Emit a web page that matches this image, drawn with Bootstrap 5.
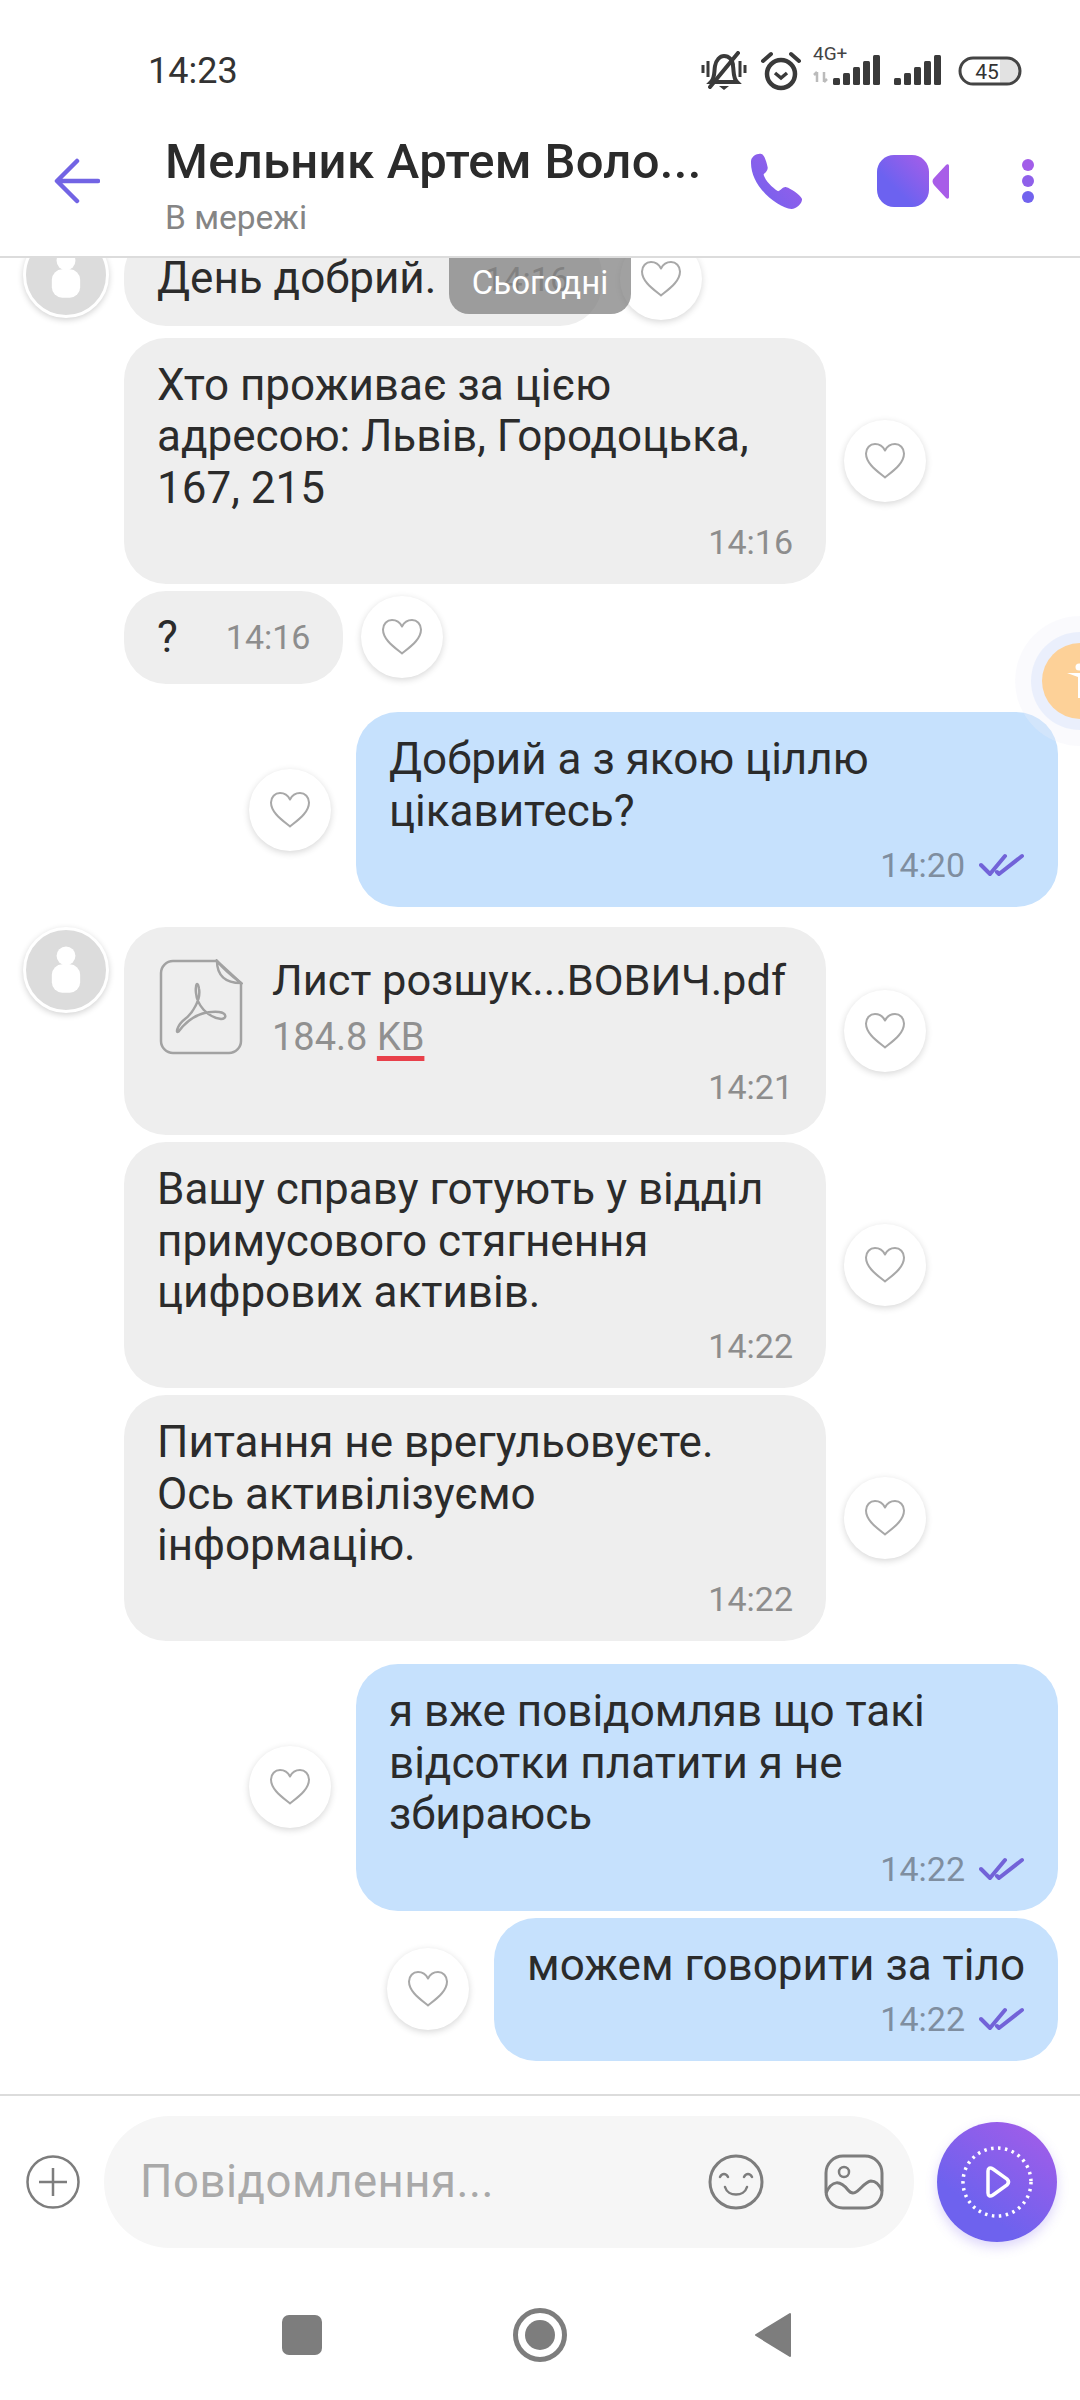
<!DOCTYPE html>
<html lang="uk">
<head>
  <meta charset="UTF-8" />
  <meta name="viewport" content="width=device-width, initial-scale=1.0" />
  <title>Chat</title>
  <link href="https://cdn.jsdelivr.net/npm/bootstrap@5.3.0/dist/css/bootstrap.min.css" rel="stylesheet" />
  <style>
    body {
      width: 1080px;
      height: 2400px;
      background: #fff;
      font-family: Roboto, "Liberation Sans", sans-serif;
      color: #2b2b2b;
      overflow: hidden;
    }

    .screen { height: 2400px; position: relative; overflow: hidden; }

    .status-bar { height: 125px; padding: 44px 58px 0 148px; }
    .status-time { font-size: 36px; line-height: 54px; color: #333; }
    .status-icons { height: 54px; }
    .sig-up { margin-bottom: 14px; }
    .gap-alarm { margin-left: 13px; }
    .gap-sig { margin-left: 11px; }

    .chat-head { height: 133px; border-bottom: 2px solid #dcdcdc; padding: 0 34px 20px 54px; }
    .chat-name { font-size: 49px; font-weight: 500; line-height: 56px; white-space: nowrap; letter-spacing: .3px; }
    .chat-state { font-size: 33.5px; line-height: 40px; color: #858585; margin-top: 8px; }
    .head-text { margin-left: 65px; width: 560px; margin-top: 11px; }
    .head-video { margin-left: 73px; }
    .head-dots { margin-left: 71px; }

    .chat-list { height: 1836px; overflow: hidden; position: relative; }
    .chat-scroll { margin-top: -26px; }

    .msg-row { display: flex; }
    .msg-in { align-items: center; }
    .msg-out { justify-content: flex-end; align-items: center; padding-right: 22px; }
    .gap-s { margin-top: 7px; }
    .gap-m { margin-top: 12px; }
    .gap-l { margin-top: 23px; }
    .gap-file { margin-top: 20px; }
    .gap-xl { margin-top: 28px; }

    .avatar-slot { width: 124px; flex: none; align-self: flex-start; padding-left: 23px; }
    .avatar-pic {
      width: 86px; height: 86px; border-radius: 50%; background: #dcdcdc;
      border: 3px solid #fff; box-shadow: 0 2px 6px rgba(0,0,0,.18);
      display: flex; align-items: center; justify-content: center;
    }

    .bubble { border-radius: 42px; padding: 22px 33px; font-size: 44px; line-height: 51.5px; }
    .bubble-in { background: #eeeeee; }
    .bubble-out { background: #c6e1fd; }
    .bubble-wide { width: 702px; }
    .msg-time { font-size: 34px; line-height: 40px; color: #8d8d8d; margin-top: 7.5px; text-align: right; }
    .msg-time-row { display: flex; justify-content: flex-end; align-items: center; gap: 14px; margin-top: 8px; }
    .msg-time-row .msg-time { margin-top: 0; color: #7f8ea0; }
    .bubble-short { display: flex; align-items: center; gap: 48px; padding-top: 21px; padding-bottom: 21px; }
    .bubble-short .msg-time { margin: 0; }
    .bubble-file { padding-bottom: 28px; }

    .heart-btn {
      width: 82px; height: 82px; border-radius: 50%; background: #fff; flex: none;
      box-shadow: 0 2px 7px rgba(0,0,0,.16);
      display: flex; align-items: center; justify-content: center;
    }
    .msg-in .heart-btn { margin-left: 18px; }
    .msg-out .heart-btn { margin-right: 25px; }

    .file-row { display: flex; gap: 29px; padding-left: 2px; }
    .file-icon { flex: none; margin-top: 10px; }
    .file-name { line-height: 51px; font-size: 43.4px; white-space: nowrap; margin-top: 6px; }
    .file-size { font-size: 38px; line-height: 44px; color: #909090; margin-top: 9px; }
    .file-size u { text-decoration: underline; text-decoration-color: #e8404a; text-decoration-thickness: 5px; text-underline-offset: 6px; }
    .bubble-file .msg-time { margin-top: 8px; }

    .date-pill {
      position: absolute; left: 449px; top: 0; width: 182px; height: 56px;
      background: rgba(125,125,125,.72); color: #fff; font-size: 33px; line-height: 50px;
      text-align: center; border-radius: 0 0 20px 20px;
    }
    .float-badge {
      position: absolute; left: 1042px; top: 643px; width: 76px; height: 76px; border-radius: 50%;
      background: #fdd198; box-shadow: 0 0 0 11px rgba(226,233,252,.65), 0 0 0 27px rgba(240,240,250,.3);
      z-index: 3; display: flex; align-items: center; padding-left: 25px;
    }

    .composer { height: 175px; border-top: 2px solid #dcdcdc; padding: 20px 22px 0 26px; }
    .composer-plus { margin-top: 39px; }
    .composer-emoji { margin-right: 60px; }
    .input-pill {
      width: 810px; height: 132px; border-radius: 66px; background: #f6f6f6; margin-left: 24px;
      padding: 0 30px 0 36px;
    }
    .input-hint { font-size: 45.5px; color: #a9a9a9; letter-spacing: .5px; }
    .send-btn {
      width: 120px; height: 120px; border-radius: 50%; margin-left: 23px; margin-top: 6px;
      background: linear-gradient(35deg, #6e62ee 30%, #a75ce8 100%);
      box-shadow: 0 5px 12px rgba(120,90,235,.25);
      display: flex; align-items: center; justify-content: center;
    }

    .nav-keys { height: 100px; padding-top: 32px; }
    .nav-slot { width: 100px; display: flex; justify-content: center; }
    .nav-left { margin-right: 138px; }
    .nav-right { margin-left: 138px; }
    .nav-back { margin-right: 10px; }
  </style>
</head>

<body>
  <svg width="0" height="0" class="d-block">
    <symbol id="heart" viewBox="0 0 42 38">
      <path d="M21 35.5 C13 29 2 21.5 2 11.5 C2 6 6 2 11 2 C15 2 19 4.5 21 8.5 C23 4.5 27 2 31 2 C36 2 40 6 40 11.5 C40 21.5 29 29 21 35.5Z" fill="none" stroke="#a8a8a8" stroke-width="2" stroke-linejoin="round" />
    </symbol>
    <symbol id="ticks" viewBox="0 0 46 24">
      <path d="M2 12 L11 21 L26 3 M18 19 L20 21 L43 3" fill="none" stroke="#7263d8" stroke-width="4" stroke-linecap="round" stroke-linejoin="round" />
    </symbol>
    <symbol id="person" viewBox="0 0 36 52">
      <circle cx="18" cy="11" r="10" fill="#fff" />
      <rect x="3" y="20" width="30" height="30" rx="11" fill="#fff" />
    </symbol>
  </svg>

  <div class="screen">
    <div class="status-bar d-flex justify-content-between align-items-start">
      <div class="status-time">14:23</div>
      <div class="status-icons d-flex align-items-center">
        <svg width="46" height="40" viewBox="0 0 46 40">
          <path d="M10 31 C14 27 13 21 14 15 C15 9 19 5 23 5 C28 5 32 9 32 15 C33 21 32 27 36 31 Z" fill="none" stroke="#3a3a3a" stroke-width="4" />
          <path d="M9 36 L37 2" stroke="#3a3a3a" stroke-width="4" stroke-linecap="round" />
          <path d="M18 35 H28 L23 39 Z" fill="#3a3a3a" />
          <path d="M2 14 V22 M7 10 V26 M39 10 V26 M44 14 V22" stroke="#3a3a3a" stroke-width="3" />
        </svg>
        <svg width="42" height="42" viewBox="0 0 42 42" class="gap-alarm">
          <circle cx="21" cy="24" r="14" fill="none" stroke="#3a3a3a" stroke-width="4.5" />
          <path d="M15 23 L21 28 L27 23" fill="none" stroke="#3a3a3a" stroke-width="3.5" />
          <path d="M3 11 L11 4 M39 11 L31 4" stroke="#3a3a3a" stroke-width="4" stroke-linecap="round" />
        </svg>
        <svg width="70" height="44" viewBox="0 0 70 44" class="sig-up gap-sig">
          <text x="0" y="18" font-size="19" font-family="Roboto, sans-serif" fill="#444">4G+</text>
          <path d="M4 30 V40 M1 33 L4 30 M11 30 V40 M14 37 L11 40" stroke="#bbb" stroke-width="2.5" fill="none" />
          <g fill="#3a3a3a">
            <rect x="20" y="36" width="7" height="7" rx="1.5" /><rect x="30" y="31" width="7" height="12" rx="1.5" />
            <rect x="40" y="25" width="7" height="18" rx="1.5" /><rect x="50" y="19" width="7" height="24" rx="1.5" />
            <rect x="60" y="13" width="7" height="30" rx="1.5" />
          </g>
        </svg>
        <svg width="48" height="44" viewBox="0 0 48 44" class="sig-up gap-sig">
          <g fill="#3a3a3a">
            <rect x="0" y="36" width="7" height="7" rx="1.5" /><rect x="10" y="31" width="7" height="12" rx="1.5" />
            <rect x="20" y="25" width="7" height="18" rx="1.5" /><rect x="30" y="19" width="7" height="24" rx="1.5" />
            <rect x="40" y="13" width="7" height="30" rx="1.5" />
          </g>
        </svg>
        <svg width="64" height="30" viewBox="0 0 64 30" class="ms-3">
          <path d="M42 3 H50 A12 12 0 0 1 50 27 H42Z" fill="#e2e2e2" />
          <rect x="2" y="2" width="60" height="26" rx="13" fill="none" stroke="#444" stroke-width="3" />
          <text x="29" y="23" text-anchor="middle" font-size="21" font-family="Roboto, sans-serif" fill="#333">45</text>
        </svg>
      </div>
    </div>

    <div class="chat-head d-flex align-items-center">
      <svg width="46" height="46" viewBox="0 0 46 46">
        <path d="M44 23 H4 M23 3 L3 23 L23 43" fill="none" stroke="#7264e4" stroke-width="4.5" stroke-linecap="round" stroke-linejoin="round" />
      </svg>
      <div class="head-text">
        <div class="chat-name">Мельник Артем Воло...</div>
        <div class="chat-state">В мережі</div>
      </div>
      <svg width="54" height="56" viewBox="0 0 52 54" class="ms-4">
        <defs>
          <linearGradient id="pg" x1="0" y1="1" x2="1" y2="0"><stop offset="0" stop-color="#6f62ee" /><stop offset="1" stop-color="#a25de9" /></linearGradient>
        </defs>
        <path d="M2 7 C3 3 8 0 12 1 C15 2 17 9 18 14 C18 18 15 19 14 21 C16 27 22 33 28 37 C31 36 33 32 36 33 C40 34 49 40 51 44 C52 48 46 54 41 54 C27 53 0 31 2 7Z" fill="url(#pg)" />
      </svg>
      <svg width="74" height="54" viewBox="0 0 74 54" class="head-video">
        <defs>
          <linearGradient id="vg" x1="0" y1="1" x2="1" y2="0"><stop offset="0.35" stop-color="#6c62f0" /><stop offset="1" stop-color="#a85de8" /></linearGradient>
        </defs>
        <rect x="1" y="1" width="52" height="52" rx="17" fill="url(#vg)" />
        <path d="M73 12 V43 C73 45 71 45 70 44 L58 31 C56 28 56 26 58 24 L70 11 C71 10 73 10 73 12Z" fill="#a85de8" />
      </svg>
      <svg width="14" height="46" viewBox="0 0 14 46" class="head-dots">
        <circle cx="7" cy="7" r="6" fill="#a25de9" /><circle cx="7" cy="23" r="6" fill="#8f60ea" /><circle cx="7" cy="39" r="6" fill="#7263ee" />
      </svg>
    </div>

    <div class="chat-list">
      <div class="chat-scroll">
        <div class="msg-row msg-in">
          <div class="avatar-slot"><div class="avatar-pic"><svg width="34" height="50"><use href="#person" /></svg></div></div>
          <div class="bubble bubble-in bubble-short"><span>День добрий.</span><span class="msg-time">14:16</span></div>
          <div class="heart-btn"><svg width="42" height="38"><use href="#heart" /></svg></div>
        </div>

        <div class="msg-row msg-in gap-m">
          <div class="avatar-slot"></div>
          <div class="bubble bubble-in bubble-wide">
            Хто проживає за цією<br />адресою: Львів, Городоцька,<br />167, 215
            <div class="msg-time">14:16</div>
          </div>
          <div class="heart-btn"><svg width="42" height="38"><use href="#heart" /></svg></div>
        </div>

        <div class="msg-row msg-in gap-s">
          <div class="avatar-slot"></div>
          <div class="bubble bubble-in bubble-short"><span>?</span><span class="msg-time">14:16</span></div>
          <div class="heart-btn"><svg width="42" height="38"><use href="#heart" /></svg></div>
        </div>

        <div class="msg-row msg-out gap-xl">
          <div class="heart-btn"><svg width="42" height="38"><use href="#heart" /></svg></div>
          <div class="bubble bubble-out bubble-wide">
            Добрий а з якою ціллю<br />цікавитесь?
            <div class="msg-time-row"><span class="msg-time">14:20</span><svg width="46" height="24"><use href="#ticks" /></svg></div>
          </div>
        </div>

        <div class="msg-row msg-in gap-file">
          <div class="avatar-slot"><div class="avatar-pic"><svg width="34" height="50"><use href="#person" /></svg></div></div>
          <div class="bubble bubble-in bubble-wide bubble-file">
            <div class="file-row">
              <svg width="84" height="96" viewBox="0 0 84 96" class="file-icon">
                <path d="M14 2 H58 L82 24 V82 A12 12 0 0 1 70 94 H14 A12 12 0 0 1 2 82 V14 A12 12 0 0 1 14 2Z" fill="none" stroke="#a2a2a2" stroke-width="2.5" />
                <path d="M58 2 C58 16 66 24 82 24 C74 18 66 12 58 2Z" fill="none" stroke="#a2a2a2" stroke-width="2.5" />
                <path d="M20 72 C16 76 18 66 26 60 C34 54 42 40 40 30 C39 22 36 24 37 34 C38 46 48 58 62 60 C68 60 68 54 60 53 C46 52 32 56 20 72Z" fill="none" stroke="#a2a2a2" stroke-width="2.5" />
              </svg>
              <div>
                <div class="file-name">Лист розшук...ВОВИЧ.pdf</div>
                <div class="file-size">184.8 <u>KB</u></div>
              </div>
            </div>
            <div class="msg-time">14:21</div>
          </div>
          <div class="heart-btn"><svg width="42" height="38"><use href="#heart" /></svg></div>
        </div>

        <div class="msg-row msg-in gap-s">
          <div class="avatar-slot"></div>
          <div class="bubble bubble-in bubble-wide">
            Вашу справу готують у відділ<br />примусового стягнення<br />цифрових активів.
            <div class="msg-time">14:22</div>
          </div>
          <div class="heart-btn"><svg width="42" height="38"><use href="#heart" /></svg></div>
        </div>

        <div class="msg-row msg-in gap-s">
          <div class="avatar-slot"></div>
          <div class="bubble bubble-in bubble-wide">
            Питання не врегульовуєте.<br />Ось активілізуємо<br />інформацію.
            <div class="msg-time">14:22</div>
          </div>
          <div class="heart-btn"><svg width="42" height="38"><use href="#heart" /></svg></div>
        </div>

        <div class="msg-row msg-out gap-l">
          <div class="heart-btn"><svg width="42" height="38"><use href="#heart" /></svg></div>
          <div class="bubble bubble-out bubble-wide">
            я вже повідомляв що такі<br />відсотки платити я не<br />збираюсь
            <div class="msg-time-row"><span class="msg-time">14:22</span><svg width="46" height="24"><use href="#ticks" /></svg></div>
          </div>
        </div>

        <div class="msg-row msg-out gap-s">
          <div class="heart-btn"><svg width="42" height="38"><use href="#heart" /></svg></div>
          <div class="bubble bubble-out">
            можем говорити за тіло
            <div class="msg-time-row"><span class="msg-time">14:22</span><svg width="46" height="24"><use href="#ticks" /></svg></div>
          </div>
        </div>
      </div>
      <div class="date-pill">Сьогодні</div>
    </div>

    <div class="float-badge">
      <svg width="24" height="36" viewBox="0 0 24 36"><circle cx="12" cy="4" r="3.5" fill="#fff" /><path d="M0 10 H24 L14 14 V35 H11 V14Z" fill="#fff" /></svg>
    </div>

    <div class="composer d-flex align-items-start">
      <svg width="54" height="54" viewBox="0 0 54 54" class="composer-plus">
        <circle cx="27" cy="27" r="25.5" fill="none" stroke="#7d7d7d" stroke-width="2.5" />
        <path d="M27 13 V41 M13 27 H41" stroke="#7d7d7d" stroke-width="2.5" />
      </svg>
      <div class="input-pill d-flex align-items-center">
        <span class="input-hint flex-grow-1">Повідомлення...</span>
        <svg width="56" height="56" viewBox="0 0 56 56" class="composer-emoji">
          <circle cx="28" cy="28" r="26" fill="none" stroke="#7d7d7d" stroke-width="3" />
          <path d="M12 23 C14 19 18 19 20 23 M36 23 C38 19 42 19 44 23 M17 33 C20 43 36 43 39 33" fill="none" stroke="#7d7d7d" stroke-width="2.5" stroke-linecap="round" />
        </svg>
        <svg width="60" height="56" viewBox="0 0 60 56">
          <rect x="2" y="2" width="56" height="52" rx="17" fill="none" stroke="#7d7d7d" stroke-width="3" />
          <circle cx="20" cy="18" r="5" fill="none" stroke="#7d7d7d" stroke-width="2.5" />
          <path d="M2 39 C8 26 16 26 24 36 C32 46 38 28 47 27 C52 27 56 32 58 37" fill="none" stroke="#7d7d7d" stroke-width="3" />
        </svg>
      </div>
      <div class="send-btn">
        <svg width="74" height="74" viewBox="0 0 74 74">
          <circle cx="37" cy="37" r="34" fill="none" stroke="#fff" stroke-width="3.5" stroke-dasharray="2.5 4.5" />
          <path d="M28 26 C28 23 30 22 33 24 L47 34 C49 36 49 38 47 40 L33 50 C30 52 28 51 28 48Z" fill="none" stroke="#fff" stroke-width="3.5" />
        </svg>
      </div>
    </div>

    <div class="nav-keys d-flex justify-content-center align-items-center">
      <div class="nav-slot nav-left">
        <svg width="40" height="40" viewBox="0 0 40 40"><rect width="40" height="40" rx="7" fill="#7d7d7d" /></svg>
      </div>
      <div class="nav-slot">
        <svg width="54" height="54" viewBox="0 0 54 54"><circle cx="27" cy="27" r="24.5" fill="none" stroke="#7d7d7d" stroke-width="5" /><circle cx="27" cy="27" r="15" fill="#7d7d7d" /></svg>
      </div>
      <div class="nav-slot nav-right">
        <svg width="38" height="46" viewBox="0 0 38 46" class="nav-back"><path d="M36 2 V44 L2 23Z" fill="#7d7d7d" stroke="#7d7d7d" stroke-width="2" stroke-linejoin="round" /></svg>
      </div>
    </div>
  </div>
</body>
</html>
